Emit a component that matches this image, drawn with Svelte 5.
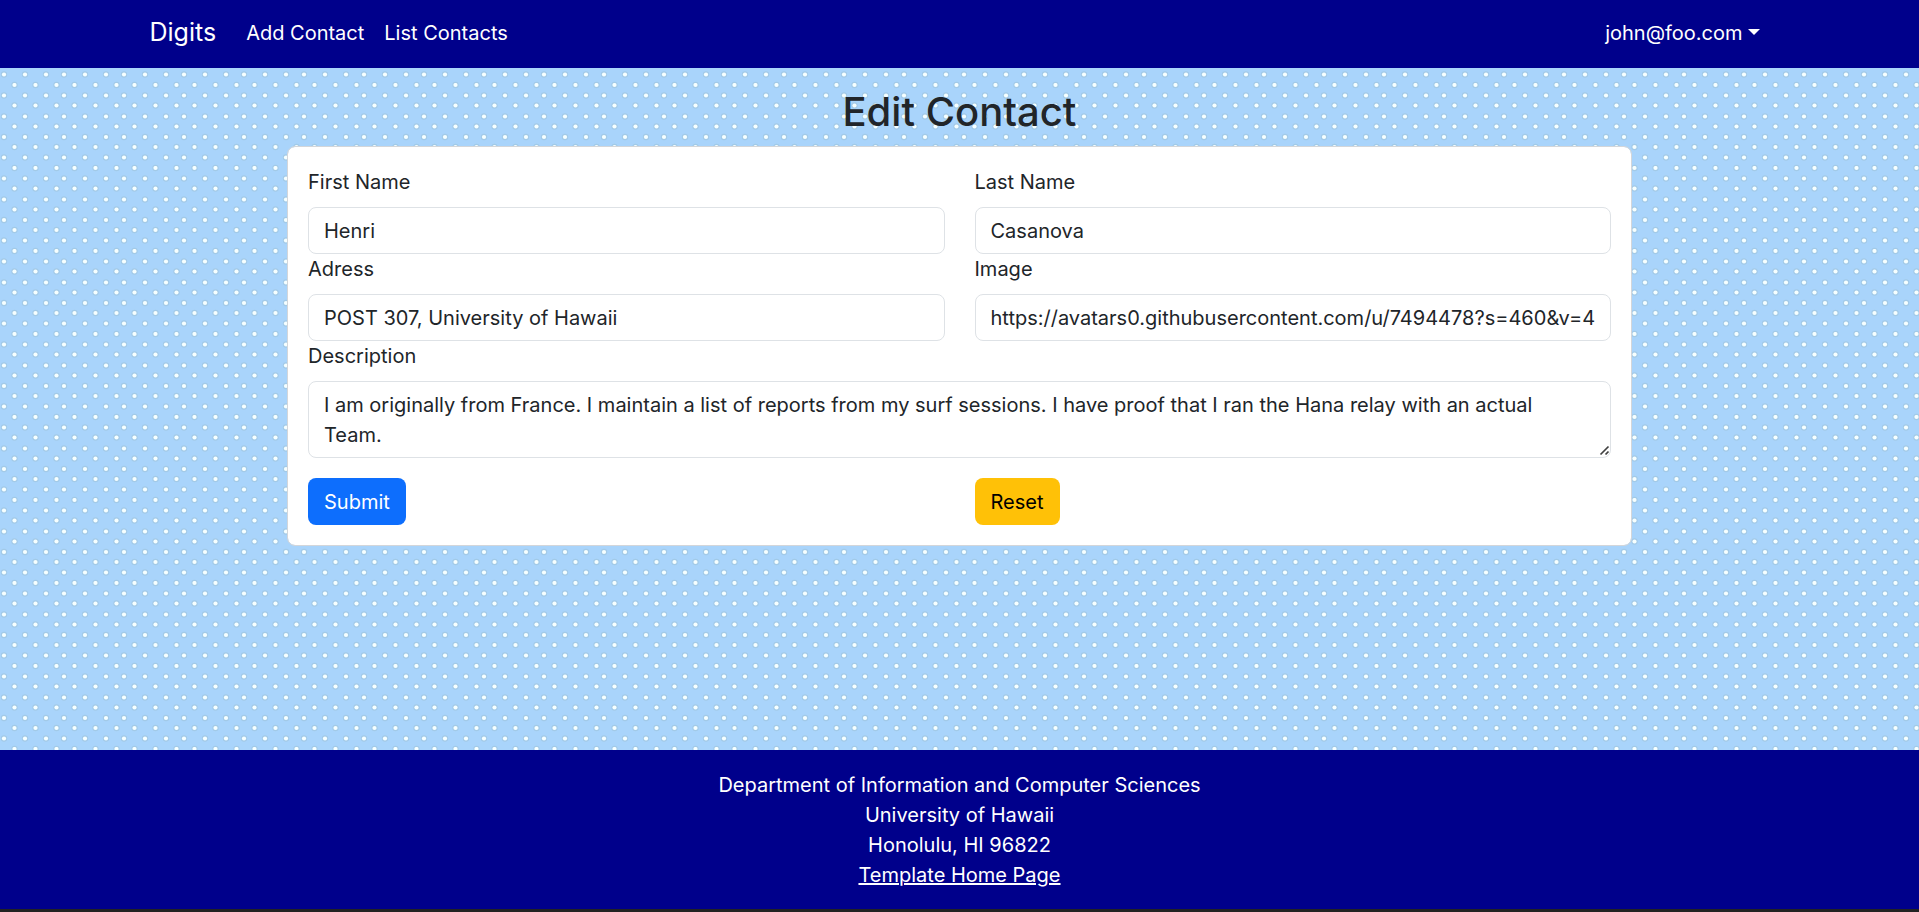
<script>
  const saved = {
    firstName: 'Henri',
    lastName: 'Casanova',
    address: 'POST 307, University of Hawaii',
    image: 'https://avatars0.githubusercontent.com/u/7494478?s=460&v=4',
    description:
      'I am originally from France. I maintain a list of reports from my surf sessions. I have proof that I ran the Hana relay with an actual Team.',
  };

  const fields = [
    { key: 'firstName', label: 'First Name' },
    { key: 'lastName', label: 'Last Name' },
    { key: 'address', label: 'Adress' },
    { key: 'image', label: 'Image' },
  ];

  let contact = $state({ ...saved });

  function reset() {
    contact = { ...saved };
  }
</script>

<div class="page">
  <nav class="navbar">
    <div class="container bar">
      <a class="brand" href="#home">Digits</a>
      <div class="links">
        <a href="#add">Add Contact</a>
        <a href="#list">List Contacts</a>
      </div>
      <button class="user" type="button">john@foo.com<span class="caret"></span></button>
    </div>
  </nav>

  <main>
    <h2>Edit Contact</h2>
    <form class="card" onsubmit={(e) => e.preventDefault()}>
      <div class="grid">
        {#each fields as { key, label } (key)}
          <div class="field">
            <label for={key}>{label}</label>
            <input id={key} type="text" bind:value={contact[key]} />
          </div>
        {/each}
        <div class="field wide">
          <label for="description">Description</label>
          <textarea id="description" rows="2" bind:value={contact.description}></textarea>
        </div>
      </div>
      <div class="grid actions">
        <div><button class="btn primary" type="submit">Submit</button></div>
        <div><button class="btn warning" type="button" onclick={reset}>Reset</button></div>
      </div>
    </form>
  </main>

  <footer>
    <div>Department of Information and Computer Sciences</div>
    <div>University of Hawaii</div>
    <div>Honolulu, HI 96822</div>
    <a href="#template">Template Home Page</a>
  </footer>
</div>

<style>
  :global(body) {
    margin: 0;
  }

  .page,
  .page * {
    box-sizing: border-box;
  }

  .page {
    display: flex;
    flex-direction: column;
    min-height: 100vh;
    border-bottom: 3px solid #222222;
    font-family: Inter, 'Liberation Sans', sans-serif;
    font-size: 20px;
    line-height: 30px;
    color: #212529;
    background-color: #a9d4fb;
    background-image: url("data:image/svg+xml,%3Csvg xmlns='http://www.w3.org/2000/svg' xmlns:xlink='http://www.w3.org/1999/xlink' width='60' height='83'%3E%3Cdefs%3E%3Cg id='d'%3E%3Ccircle r='3.2' fill='%239cc0d6' fill-opacity='.55'/%3E%3Ccircle r='2.1' fill='%23f6ffff'/%3E%3C/g%3E%3Cg id='a'%3E%3Cuse xlink:href='%23d' x='4'/%3E%3Cuse xlink:href='%23d' x='25'/%3E%3Cuse xlink:href='%23d' x='46'/%3E%3C/g%3E%3Cg id='b'%3E%3Cuse xlink:href='%23d' x='14.5'/%3E%3Cuse xlink:href='%23d' x='35.5'/%3E%3Cuse xlink:href='%23d' x='56.5'/%3E%3C/g%3E%3C/defs%3E%3Cuse xlink:href='%23a' y='12.5'/%3E%3Cuse xlink:href='%23a' y='33.5'/%3E%3Cuse xlink:href='%23a' y='54'/%3E%3Cuse xlink:href='%23a' y='74.5'/%3E%3Cuse xlink:href='%23b' y='2'/%3E%3Cuse xlink:href='%23b' y='85'/%3E%3Cuse xlink:href='%23b' y='22.5'/%3E%3Cuse xlink:href='%23b' y='43.5'/%3E%3Cuse xlink:href='%23b' y='64'/%3E%3C/svg%3E");
  }

  .navbar {
    background: #00008b;
    padding: 9px 0 11px;
  }

  .container {
    width: 100%;
    max-width: 1650px;
    margin: 0 auto;
    padding: 0 25px 0 15px;
  }

  .bar {
    display: flex;
    align-items: center;
    min-height: 48px;
  }

  .bar a,
  .user {
    color: #ffffff;
    text-decoration: none;
  }

  .brand {
    margin-right: 30px;
    padding-bottom: 2px;
    font-size: 25px;
  }

  .links {
    display: flex;
    flex: 1;
    gap: 20px;
  }

  .user {
    display: flex;
    align-items: center;
    gap: 5px;
    padding: 0;
    border: 0;
    background: none;
    font: inherit;
    cursor: pointer;
  }

  .caret {
    margin-bottom: 2px;
    border: 6px solid transparent;
    border-top-color: #ffffff;
    border-bottom: 0;
  }

  main {
    flex: 1;
    width: 100%;
    max-width: 1375px;
    margin: 0 auto;
    padding: 20px 15px;
  }

  h2 {
    margin: 0 0 10px;
    font-size: 40px;
    font-weight: 500;
    line-height: 48px;
    text-align: center;
  }

  .card {
    padding: 20px;
    border: 1px solid #d3d6da;
    border-radius: 8px;
    background: #ffffff;
    background-clip: padding-box;
  }

  .grid {
    display: grid;
    grid-template-columns: 1fr 1fr;
    column-gap: 30px;
  }

  .wide {
    grid-column: 1 / -1;
  }

  label {
    display: block;
    margin-bottom: 10px;
  }

  input,
  textarea {
    display: block;
    width: 100%;
    padding: 7px 15px;
    border: 1px solid #dee2e6;
    border-radius: 8px;
    background: #ffffff;
    color: inherit;
    font: inherit;
  }

  input {
    height: 47px;
  }

  textarea {
    height: 77px;
    padding: 8px 20px 7px 15px;
    resize: vertical;
    overflow: auto;
  }

  textarea::-webkit-resizer {
    background: url("data:image/svg+xml,%3Csvg xmlns='http://www.w3.org/2000/svg' width='15' height='15'%3E%3Cpath d='M5.5 12.5 13.5 4.5M10.5 12.5 13.5 9.5' stroke='%23404040' stroke-width='1.7' fill='none'/%3E%3C/svg%3E") no-repeat right bottom;
  }

  .actions {
    padding-top: 20px;
  }

  .btn {
    height: 47px;
    padding: 0 16px;
    border: 0;
    border-radius: 8px;
    font: inherit;
    cursor: pointer;
  }

  .primary {
    background: #0d6efd;
    color: #ffffff;
  }

  .warning {
    background: #ffc107;
    color: #000000;
  }

  footer {
    padding: 20px;
    padding-bottom: 19px;
    background: #00008b;
    color: #ffffff;
    text-align: center;
  }

  footer a {
    color: #ffffff;
  }
</style>
